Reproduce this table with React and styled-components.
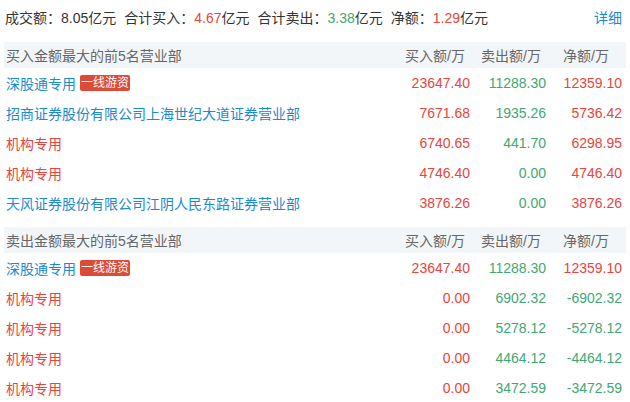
import React from "react";
import styled, { createGlobalStyle } from "styled-components";

const GlobalStyle = createGlobalStyle`
  body {
    margin: 0;
    background: #fff;
    font-family: "Liberation Sans", "Noto Sans CJK SC", sans-serif;
    font-size: 14px;
    color: #333;
  }
`;

const RED = "#e8453c";
const GREEN = "#3fa872";
const BLUE = "#1a8bcc";

const Page = styled.div`
  width: 630px;
  padding: 0 4px;
  box-sizing: border-box;
`;

const Summary = styled.div`
  display: flex;
  align-items: center;
  height: 34px;
  padding-left: 1px;
  padding-right: 4px;
`;

const SummaryItem = styled.span`
  margin-right: 8px;
  white-space: nowrap;
`;

const Num = styled.span`
  color: ${(p) => p.$color || "#333"};
`;

const Detail = styled.a`
  margin-left: auto;
  color: ${BLUE};
  text-decoration: none;
  cursor: pointer;
`;

const Section = styled.div`
  margin-top: ${(p) => p.$top}px;
`;

const Grid = styled.div`
  display: grid;
  grid-template-columns: 1fr 78px 76px 76px;
  align-items: center;
  padding: 0 4px 0 2px;
`;

const HeadRow = styled(Grid)`
  height: 26px;
  background: #f3f6f9;
  color: #666;
`;

const Row = styled(Grid)`
  height: 30px;
`;

const Cell = styled.div`
  text-align: right;
  white-space: nowrap;
  color: ${(p) => p.$color || "inherit"};
  padding-right: ${(p) => p.$pad || 0}px;
`;

const Name = styled.div`
  display: flex;
  align-items: center;
  gap: 4px;
  color: ${(p) => (p.$inst ? RED : BLUE)};
  white-space: nowrap;
`;

const Badge = styled.span`
  background: #dd4a38;
  color: #fff;
  font-size: 12px;
  line-height: 16px;
  padding: 0 1px;
  border-radius: 2px;
`;

const colorOf = (v) => (v.startsWith("-") ? GREEN : v === "0.00" ? "#333" : RED);

const buyRows = [
  ["深股通专用", true, "23647.40", "11288.30", "12359.10"],
  ["招商证券股份有限公司上海世纪大道证券营业部", false, "7671.68", "1935.26", "5736.42"],
  ["机构专用", false, "6740.65", "441.70", "6298.95"],
  ["机构专用", false, "4746.40", "0.00", "4746.40"],
  ["天风证券股份有限公司江阴人民东路证券营业部", false, "3876.26", "0.00", "3876.26"],
];

const sellRows = [
  ["深股通专用", true, "23647.40", "11288.30", "12359.10"],
  ["机构专用", false, "0.00", "6902.32", "-6902.32"],
  ["机构专用", false, "0.00", "5278.12", "-5278.12"],
  ["机构专用", false, "0.00", "4464.12", "-4464.12"],
  ["机构专用", false, "0.00", "3472.59", "-3472.59"],
];

const Table = ({ title, rows, top }) => (
  <Section $top={top}>
    <HeadRow>
      <div>{title}</div>
      <Cell $pad={5}>买入额/万</Cell>
      <Cell $pad={5}>卖出额/万</Cell>
      <Cell $pad={13}>净额/万</Cell>
    </HeadRow>
    {rows.map(([name, badge, buy, sell, net], i) => (
      <Row key={i}>
        <Name $inst={name === "机构专用"}>
          {name}
          {badge && <Badge>一线游资</Badge>}
        </Name>
        <Cell $color={RED}>{buy}</Cell>
        <Cell $color={GREEN}>{sell}</Cell>
        <Cell $color={colorOf(net)}>{net}</Cell>
      </Row>
    ))}
  </Section>
);

export default function App() {
  return (
    <Page>
      <GlobalStyle />
      <Summary>
        <SummaryItem>
          成交额：<Num>8.05</Num>亿元
        </SummaryItem>
        <SummaryItem>
          合计买入：<Num $color={RED}>4.67</Num>亿元
        </SummaryItem>
        <SummaryItem>
          合计卖出：<Num $color={GREEN}>3.38</Num>亿元
        </SummaryItem>
        <SummaryItem>
          净额：<Num $color={RED}>1.29</Num>亿元
        </SummaryItem>
        <Detail>详细</Detail>
      </Summary>
      <Table title="买入金额最大的前5名营业部" rows={buyRows} top={8} />
      <Table title="卖出金额最大的前5名营业部" rows={sellRows} top={9} />
    </Page>
  );
}
